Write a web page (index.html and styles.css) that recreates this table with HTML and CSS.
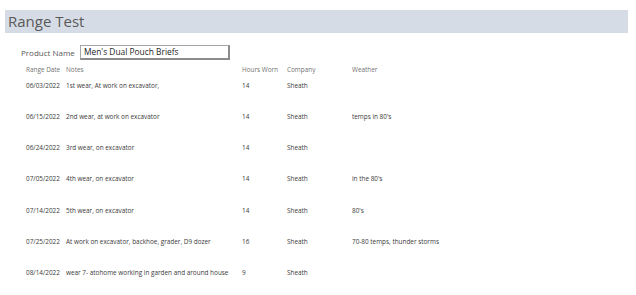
FILE: index.html
```html
<!DOCTYPE html>
<html>
<head>
<meta charset="utf-8">
<link rel="stylesheet" href="styles.css">
</head>
<body>
<div class="header"><span class="title">Range Test</span></div>
<div class="product">
  <span class="plabel">Product Name</span>
  <div class="pbox">Men's Dual Pouch Briefs</div>
</div>
<div class="table">
  <div class="row head">
    <span>Range Date</span><span>Notes</span><span>Hours Worn</span><span>Company</span><span>Weather</span>
  </div>
  <div class="row">
    <span>06/03/2022</span><span>1st wear, At work on excavator,</span><span>14</span><span>Sheath</span><span></span>
  </div>
  <div class="row">
    <span>06/15/2022</span><span>2nd wear, at work on excavator</span><span>14</span><span>Sheath</span><span>temps in 80's</span>
  </div>
  <div class="row">
    <span>06/24/2022</span><span>3rd wear, on excavator</span><span>14</span><span>Sheath</span><span></span>
  </div>
  <div class="row">
    <span>07/05/2022</span><span>4th wear, on excavator</span><span>14</span><span>Sheath</span><span>in the 80's</span>
  </div>
  <div class="row">
    <span>07/14/2022</span><span>5th wear, on excavator</span><span>14</span><span>Sheath</span><span>80's</span>
  </div>
  <div class="row">
    <span>07/25/2022</span><span>At work on excavator, backhoe, grader, D9 dozer</span><span>16</span><span>Sheath</span><span>70-80 temps, thunder storms</span>
  </div>
  <div class="row">
    <span>08/14/2022</span><span>wear 7- atohome working in garden and around house</span><span>9</span><span>Sheath</span><span></span>
  </div>
</div>
</body>
</html>
```
FILE: styles.css
```css
html, body {
  margin: 0;
  padding: 0;
  background: #ffffff;
  font-family: "Open Sans", "Noto Sans", sans-serif;
}
.header {
  margin: 10px 8px 0 5px;
  height: 23px;
  background: #d6dce5;
  display: flex;
  align-items: center;
}
.title {
  padding-left: 3px;
  font-size: 15px;
  color: #595959;
  line-height: 23px;
}
.product {
  display: flex;
  align-items: center;
  margin-top: 12px;
  padding-left: 21px;
  height: 14px;
}
.plabel {
  font-size: 8px;
  color: #595959;
  width: 59px;
}
.pbox {
  width: 144px;
  height: 12px;
  border: 1px solid #a6a6a6;
  border-right: 2px solid #8c8c8c;
  border-bottom: 2px solid #8c8c8c;
  font-size: 8.4px;
  line-height: 12px;
  padding-left: 3px;
  color: #262626;
}
.table {
  margin-top: 6px;
  padding-left: 26px;
}
.row {
  display: grid;
  grid-template-columns: 40px 176px 45px 65px 1fr;
  height: 31.17px;
  font-size: 6.4px;
  line-height: 10px;
  color: #3a3a3a;
  padding-top: 1px;
  box-sizing: border-box;
}
.row.head {
  height: 15px;
  padding-top: 0;
  color: #737373;
}
```
